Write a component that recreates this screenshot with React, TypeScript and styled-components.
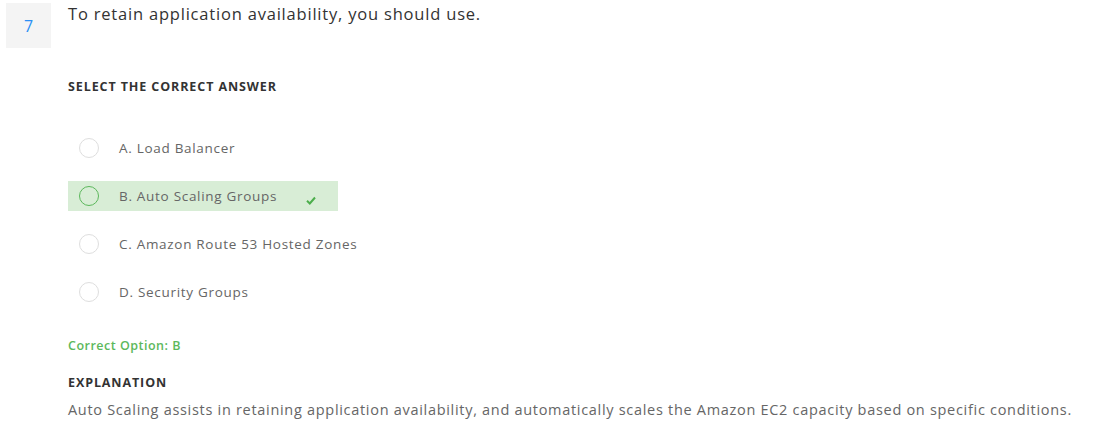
import React from "react";
import styled, { createGlobalStyle } from "styled-components";

const Global = createGlobalStyle`
  html, body { margin: 0; padding: 0; background: #fff; }
  body { font-family: "Open Sans", "Liberation Sans", sans-serif; }
`;

const Page = styled.div`
  display: flex;
  align-items: flex-start;
  gap: 17px;
  padding: 3px 0 0 6px;
`;

const NumberBox = styled.div`
  width: 45px;
  height: 45px;
  background: #f4f4f4;
  color: #2b8ff5;
  font-size: 16px;
  display: flex;
  align-items: center;
  justify-content: center;
  flex-shrink: 0;
`;

const Content = styled.div`
  display: flex;
  flex-direction: column;
  align-items: flex-start;
`;

const Question = styled.div`
  font-size: 16.5px;
  line-height: 22px;
  letter-spacing: 0.8px;
  color: #333;
`;

const Heading = styled.div<{ $top: number }>`
  font-size: 12.5px;
  font-weight: 700;
  letter-spacing: 0.9px;
  color: #333;
  line-height: 16px;
  margin-top: ${(p) => p.$top}px;
`;

const Options = styled.div`
  display: flex;
  flex-direction: column;
  align-items: flex-start;
  gap: 18px;
  margin-top: 38px;
`;

const OptionRow = styled.div<{ $correct?: boolean }>`
  display: flex;
  align-items: center;
  height: 30px;
  min-width: 270px;
  padding-left: 11px;
  box-sizing: border-box;
  white-space: nowrap;
  background: ${(p) => (p.$correct ? "#d8edd6" : "transparent")};
`;

const Radio = styled.span<{ $correct?: boolean }>`
  width: 20px;
  height: 20px;
  border-radius: 50%;
  box-sizing: border-box;
  border: 1px solid ${(p) => (p.$correct ? "#5cb85c" : "#dedede")};
  background: ${(p) => (p.$correct ? "transparent" : "#fff")};
  flex-shrink: 0;
`;

const OptionText = styled.span`
  margin-left: 20px;
  font-size: 13.5px;
  letter-spacing: 0.7px;
  color: #666;
`;

const Check = styled.svg`
  margin-left: 29px;
  margin-top: 8px;
`;

const CorrectOption = styled.div`
  margin-top: 31px;
  font-size: 12.5px;
  letter-spacing: 0.5px;
  color: #5cb85c;
  line-height: 16px;
  font-weight: 600;
`;

const Explanation = styled.div`
  margin-top: 9px;
  font-size: 14.5px;
  line-height: 20px;
  letter-spacing: 0.7px;
  color: #666;
`;

const options = [
  { label: "A. Load Balancer" },
  { label: "B. Auto Scaling Groups", correct: true },
  { label: "C. Amazon Route 53 Hosted Zones" },
  { label: "D. Security Groups" },
];

export default function App() {
  return (
    <>
      <Global />
      <Page>
        <NumberBox>7</NumberBox>
        <Content>
          <Question>To retain application availability, you should use.</Question>
          <Heading $top={54}>SELECT THE CORRECT ANSWER</Heading>
          <Options>
            {options.map((o) => (
              <OptionRow key={o.label} $correct={o.correct}>
                <Radio $correct={o.correct} />
                <OptionText>{o.label}</OptionText>
                {o.correct && (
                  <Check width="10" height="9" viewBox="0 0 10 9">
                    <path d="M1 4.8 L3.8 7.5 L9 1.5" fill="none" stroke="#4cae4c" strokeWidth="2" />
                  </Check>
                )}
              </OptionRow>
            ))}
          </Options>
          <CorrectOption>Correct Option: B</CorrectOption>
          <Heading $top={21}>EXPLANATION</Heading>
          <Explanation>
            Auto Scaling assists in retaining application availability, and automatically scales the Amazon EC2 capacity based on specific conditions.
          </Explanation>
        </Content>
      </Page>
    </>
  );
}
